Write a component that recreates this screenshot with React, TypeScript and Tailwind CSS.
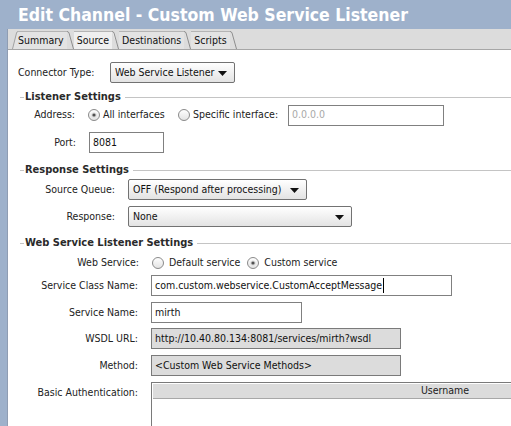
import React from "react";

const FONT = "font-['DejaVu_Sans_Condensed','Liberation_Sans',sans-serif]";

function Radio({ checked }: { checked?: boolean }) {
  return (
    <svg width="12" height="12" viewBox="0 0 12 12" className="shrink-0">
      <defs>
        <linearGradient id="rg" x1="0" y1="0" x2="0" y2="1">
          <stop offset="0" stopColor="#ffffff" />
          <stop offset="1" stopColor="#e2e2e2" />
        </linearGradient>
      </defs>
      <circle cx="6" cy="6" r="5.5" fill="url(#rg)" stroke="#8a8a8a" />
      {checked && (
        <>
          <circle cx="6" cy="6" r="2.6" fill="#d8d8d8" />
          <circle cx="6" cy="6" r="1.6" fill="#505050" />
        </>
      )}
    </svg>
  );
}

function Select({ value, width }: { value: string; width: string }) {
  return (
    <div
      className={`relative flex h-[21px] items-center rounded-[2px] border border-[#727272] bg-gradient-to-b from-white to-[#e3e3e3] pl-[4px] ${width}`}
    >
      <span className="text-[#111]">{value}</span>
      <svg width="9" height="5" viewBox="0 0 9 5" className="absolute right-[7px] top-[8px]">
        <path d="M0 0 H9 L4.5 5 Z" fill="#111" />
      </svg>
    </div>
  );
}

function Field({
  value,
  width,
  disabled,
  readonly,
  cursor,
}: {
  value: string;
  width: string;
  disabled?: boolean;
  readonly?: boolean;
  cursor?: boolean;
}) {
  return (
    <div
      className={`flex h-[21px] items-center border pl-[3px] ${width} ${
        readonly ? "border-[#7a7a7a] bg-[#dcdcdc]" : "border-[#808080] bg-white"
      } ${disabled ? "text-[#a8a8a8]" : "text-[#111]"}`}
    >
      <span>{value}</span>
      {cursor && <span className="ml-px h-[15px] w-px bg-black" />}
    </div>
  );
}

function Heading({ title }: { title: string }) {
  return (
    <div className="flex h-[14px] items-center">
      <span className="ml-[12px] h-px w-[4px] bg-[#c4c4c4]" />
      <span className="ml-px text-[11px] font-bold text-[#2a2a2a]">{title}</span>
      <span className="ml-[4px] h-px flex-1 bg-[#c4c4c4]" />
    </div>
  );
}

function Row({
  label,
  labelWidth,
  className,
  children,
}: {
  label: string;
  labelWidth: string;
  className?: string;
  children: React.ReactNode;
}) {
  return (
    <div className={`flex items-center ${className ?? ""}`}>
      <span className={`shrink-0 pr-[13px] text-right text-[#222] ${labelWidth}`}>{label}</span>
      {children}
    </div>
  );
}

const TABS = ["Summary", "Source", "Destinations", "Scripts"];

function Tabs() {
  return (
    <div className="flex h-[21px] items-end border-b border-[#a6a6a6] bg-[#dcdcdc] pl-[4px]">
      {TABS.map((t, i) => (
        <div key={t} className="flex h-[18px] items-stretch">
          {i === 0 && (
            <svg width="6" height="18" viewBox="0 0 6 18" className="shrink-0">
              <path d="M0.5 18 L4.5 2 Q5 0.5 6 0.5 V18 Z" fill="#e3e3e3" />
              <path d="M0.5 18 L4.5 2 Q5 0.5 6 0.5" fill="none" stroke="#a0a0a0" />
            </svg>
          )}
          <div
            className={`flex items-center border-t border-[#b4b4b4] pr-[3px] text-[#111] ${
              i === 0 ? "pl-0" : "pl-[3px]"
            } ${t === "Source" ? "bg-[#efefef]" : "bg-[#e3e3e3]"}`}
          >
            {t}
          </div>
          <svg width="7" height="18" viewBox="0 0 7 18" className="shrink-0">
            <path
              d="M0 0.5 Q1.5 0.5 2 2 L6.5 18"
              fill={t === "Source" ? "#efefef" : "#e3e3e3"}
              stroke="#8c8c8c"
            />
          </svg>
        </div>
      ))}
    </div>
  );
}

export default function App() {
  return (
    <div className={`h-[426px] w-[511px] overflow-hidden bg-[#9eb1cb] text-[10.5px] ${FONT}`}>
      <div className="flex h-[29px] items-center pl-[18px] pt-[1px] text-[17.5px] font-bold text-white">
        Edit Channel - Custom Web Service Listener
      </div>
      <div className="ml-[7px] h-full border-l border-[#8f9db3] bg-white">
        <Tabs />

        <div className="mt-[12px] flex h-[21px] items-center pl-[10px]">
          <span className="w-[92px] text-[#222]">Connector Type:</span>
          <Select value="Web Service Listener" width="w-[125px]" />
        </div>

        <div className="mt-[7px]">
          <Heading title="Listener Settings" />
        </div>
        <Row label="Address:" labelWidth="w-[80px]" className="mt-px h-[20px]">
          <Radio checked />
          <span className="ml-[3px] w-[72px] shrink-0 text-[#222]">All interfaces</span>
          <span className="ml-[3px]">
            <Radio />
          </span>
          <span className="ml-[3px] w-[91px] shrink-0 text-[#222]">Specific interface:</span>
          <span className="ml-[4px]">
            <Field value="0.0.0.0" width="w-[156px]" disabled />
          </span>
        </Row>
        <Row label="Port:" labelWidth="w-[81px]" className="mt-[7px]">
          <Field value="8081" width="w-[75px]" />
        </Row>

        <div className="mt-[10px]">
          <Heading title="Response Settings" />
        </div>
        <Row label="Source Queue:" labelWidth="w-[120px]" className="mt-[2px]">
          <Select value="OFF (Respond after processing)" width="w-[179px]" />
        </Row>
        <Row label="Response:" labelWidth="w-[120px]" className="mt-[6px]">
          <Select value="None" width="w-[224px]" />
        </Row>

        <div className="mt-[9px]">
          <Heading title="Web Service Listener Settings" />
        </div>
        <Row label="Web Service:" labelWidth="w-[144px]" className="mt-[4px] h-[18px]">
          <Radio />
          <span className="ml-[5px] text-[#222]">Default service</span>
          <span className="ml-[7px]">
            <Radio checked />
          </span>
          <span className="ml-[5px] text-[#222]">Custom service</span>
        </Row>
        <Row label="Service Class Name:" labelWidth="w-[143px]" className="mt-[3px]">
          <Field value="com.custom.webservice.CustomAcceptMessage" width="w-[301px]" cursor />
        </Row>
        <Row label="Service Name:" labelWidth="w-[143px]" className="mt-[6px]">
          <Field value="mirth" width="w-[151px]" />
        </Row>
        <Row label="WSDL URL:" labelWidth="w-[143px]" className="mt-[5px]">
          <Field value="http://10.40.80.134:8081/services/mirth?wsdl" width="w-[250px]" readonly />
        </Row>
        <Row label="Method:" labelWidth="w-[143px]" className="mt-[6px]">
          <Field value="<Custom Web Service Methods>" width="w-[250px]" readonly />
        </Row>
        <div className="mt-[6px] flex items-start">
          <span className="w-[143px] shrink-0 pr-[13px] pt-[3px] text-right text-[#222]">
            Basic Authentication:
          </span>
          <div className="h-[60px] w-[700px] shrink-0 border border-[#7a7a7a] bg-white p-px">
            <div className="flex h-[15px] border-b border-[#a8a8a8] bg-[#dcdcdc]">
              <div className="flex w-[584px] items-center justify-center text-[#222]">Username</div>
            </div>
          </div>
        </div>
      </div>
    </div>
  );
}
